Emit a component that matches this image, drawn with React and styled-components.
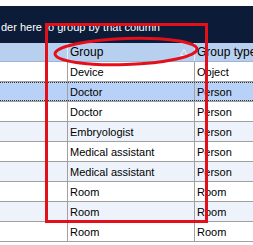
import React from 'react';
import styled, { createGlobalStyle } from 'styled-components';

const GlobalStyle = createGlobalStyle`
  html, body {
    margin: 0;
    padding: 0;
    background: #fff;
  }
  body {
    font-family: "Liberation Sans", Arial, sans-serif;
    font-size: 11px;
    color: #000;
  }
`;

const Page = styled.div`
  position: relative;
  width: 253px;
  height: 245px;
  overflow: hidden;
  padding-top: 6px;
  box-sizing: border-box;
`;

const GroupPanel = styled.div`
  height: 37px;
  background: #0c1b38;
  color: #fff;
  font-size: 11px;
  display: flex;
  align-items: center;
  padding-left: 1px;
  padding-top: 5px;
  box-sizing: border-box;
  white-space: nowrap;
`;

const Row = styled.div`
  position: relative;
  display: grid;
  grid-template-columns: 68px 127px 1fr;
  height: 20px;
  box-sizing: border-box;
  border-bottom: 1px solid #a0a0a0;
  background: ${(p) => (p.$selected ? '#b7d1f7' : p.$alt ? '#eef3fb' : '#fff')};

  ${(p) =>
    p.$selected &&
    `
    &::after {
      content: '';
      position: absolute;
      left: 0;
      right: 0;
      top: 0;
      bottom: 0;
      border-top: 1px dotted #333;
      border-bottom: 1px dotted #333;
      pointer-events: none;
    }
  `}
`;

const HeaderRow = styled(Row)`
  background: #b8d0f0;
  height: 19px;
  border-bottom: 1px solid #9fb4d3;
  font-size: 12px;
`;

const Cell = styled.div`
  display: flex;
  align-items: center;
  padding-left: 2px;
  border-right: 1px solid #a0a0a0;
  white-space: nowrap;
  overflow: hidden;
  &:last-child {
    border-right: none;
  }
`;

const HeaderCell = styled(Cell)`
  border-right: 1px solid #e8eef8;
  justify-content: space-between;
  padding-right: 6px;
`;

const SortArrow = styled.svg`
  flex: none;
`;

const Annotations = styled.svg`
  position: absolute;
  left: 0;
  top: 0;
  pointer-events: none;
`;

const rows = [
  ['Device', 'Object'],
  ['Doctor', 'Person'],
  ['Doctor', 'Person'],
  ['Embryologist', 'Person'],
  ['Medical assistant', 'Person'],
  ['Medical assistant', 'Person'],
  ['Room', 'Room'],
  ['Room', 'Room'],
  ['Room', 'Room'],
];

export default function App() {
  return (
    <Page>
      <GlobalStyle />
      <GroupPanel>der here to group by that column</GroupPanel>
      <HeaderRow>
        <HeaderCell />
        <HeaderCell>
          Group
          <SortArrow width="8" height="7" viewBox="0 0 8 7">
            <path d="M4 0.5 L7.5 6.5 L0.5 6.5 Z" fill="none" stroke="#eef3fb" strokeWidth="1" />
          </SortArrow>
        </HeaderCell>
        <HeaderCell>Group type</HeaderCell>
      </HeaderRow>
      {rows.map(([group, type], i) => (
        <Row key={i} $selected={i === 1} $alt={i % 2 === 1}>
          <Cell />
          <Cell>{group}</Cell>
          <Cell>{type}</Cell>
        </Row>
      ))}
      <Annotations width="253" height="245" viewBox="0 0 253 245">
        <rect x="46.5" y="24.5" width="160" height="197" fill="none" stroke="#e3101b" strokeWidth="3" />
        <ellipse
          cx="126"
          cy="51.5"
          rx="71"
          ry="13"
          fill="none"
          stroke="#e3101b"
          strokeWidth="3"
          transform="rotate(-2 126 51.5)"
        />
      </Annotations>
    </Page>
  );
}
